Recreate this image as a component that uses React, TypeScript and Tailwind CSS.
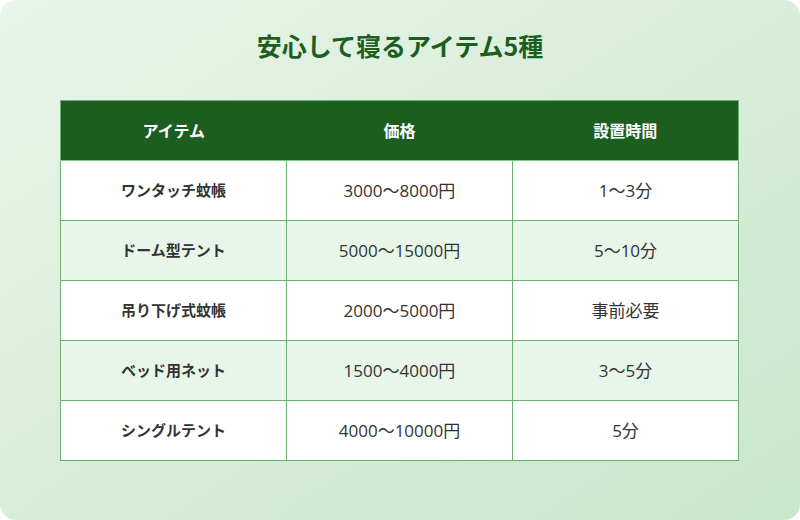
const rows = [
  { name: 'ワンタッチ蚊帳', price: '3000〜8000円', time: '1〜3分' },
  { name: 'ドーム型テント', price: '5000〜15000円', time: '5〜10分' },
  { name: '吊り下げ式蚊帳', price: '2000〜5000円', time: '事前必要' },
  { name: 'ベッド用ネット', price: '1500〜4000円', time: '3〜5分' },
  { name: 'シングルテント', price: '4000〜10000円', time: '5分' },
];

const App = () => {
  return (
    <div
      className="w-[800px] h-[520px] bg-white"
      style={{ fontFamily: '"Open Sans", "Noto Sans CJK JP", sans-serif' }}
    >
      <div className="w-full h-full rounded-2xl bg-gradient-to-br from-[#e8f5e9] to-[#c8e6c9] px-[60px] pt-[29px]">
        {/* Title */}
        <h1 className="text-center text-[25px] leading-8 font-bold text-[#1b5e20] mb-[39px]" style={{ fontFamily: '"Noto Sans CJK JP", sans-serif' }}>
          安心して寝るアイテム5種
        </h1>

        <table className="w-[679px] border-collapse border border-[#6fae72] text-[#333]">
          <thead>
            <tr className="h-[60px] bg-[#1b5e20] text-white">
              <th className="w-1/3 text-base font-bold border-b border-[#81c784]">アイテム</th>
              <th className="w-1/3 text-base font-bold border-b border-[#81c784]">価格</th>
              <th className="w-1/3 text-base font-bold border-b border-[#81c784]">設置時間</th>
            </tr>
          </thead>
          <tbody>
            {rows.map((r, i) => (
              <tr key={r.name} className={`h-[60px] ${i % 2 === 1 ? 'bg-[#e8f5e9]' : 'bg-white'}`}>
                <td className="border border-[#6fae72] text-center text-[15px] font-bold" style={{ fontFamily: '"Noto Sans CJK JP", sans-serif' }}>
                  {r.name}
                </td>
                <td className="border border-[#6fae72] text-center text-[17px]">{r.price}</td>
                <td className="border border-[#6fae72] text-center text-[17px]">{r.time}</td>
              </tr>
            ))}
          </tbody>
        </table>
      </div>
    </div>
  );
};

export default App;
